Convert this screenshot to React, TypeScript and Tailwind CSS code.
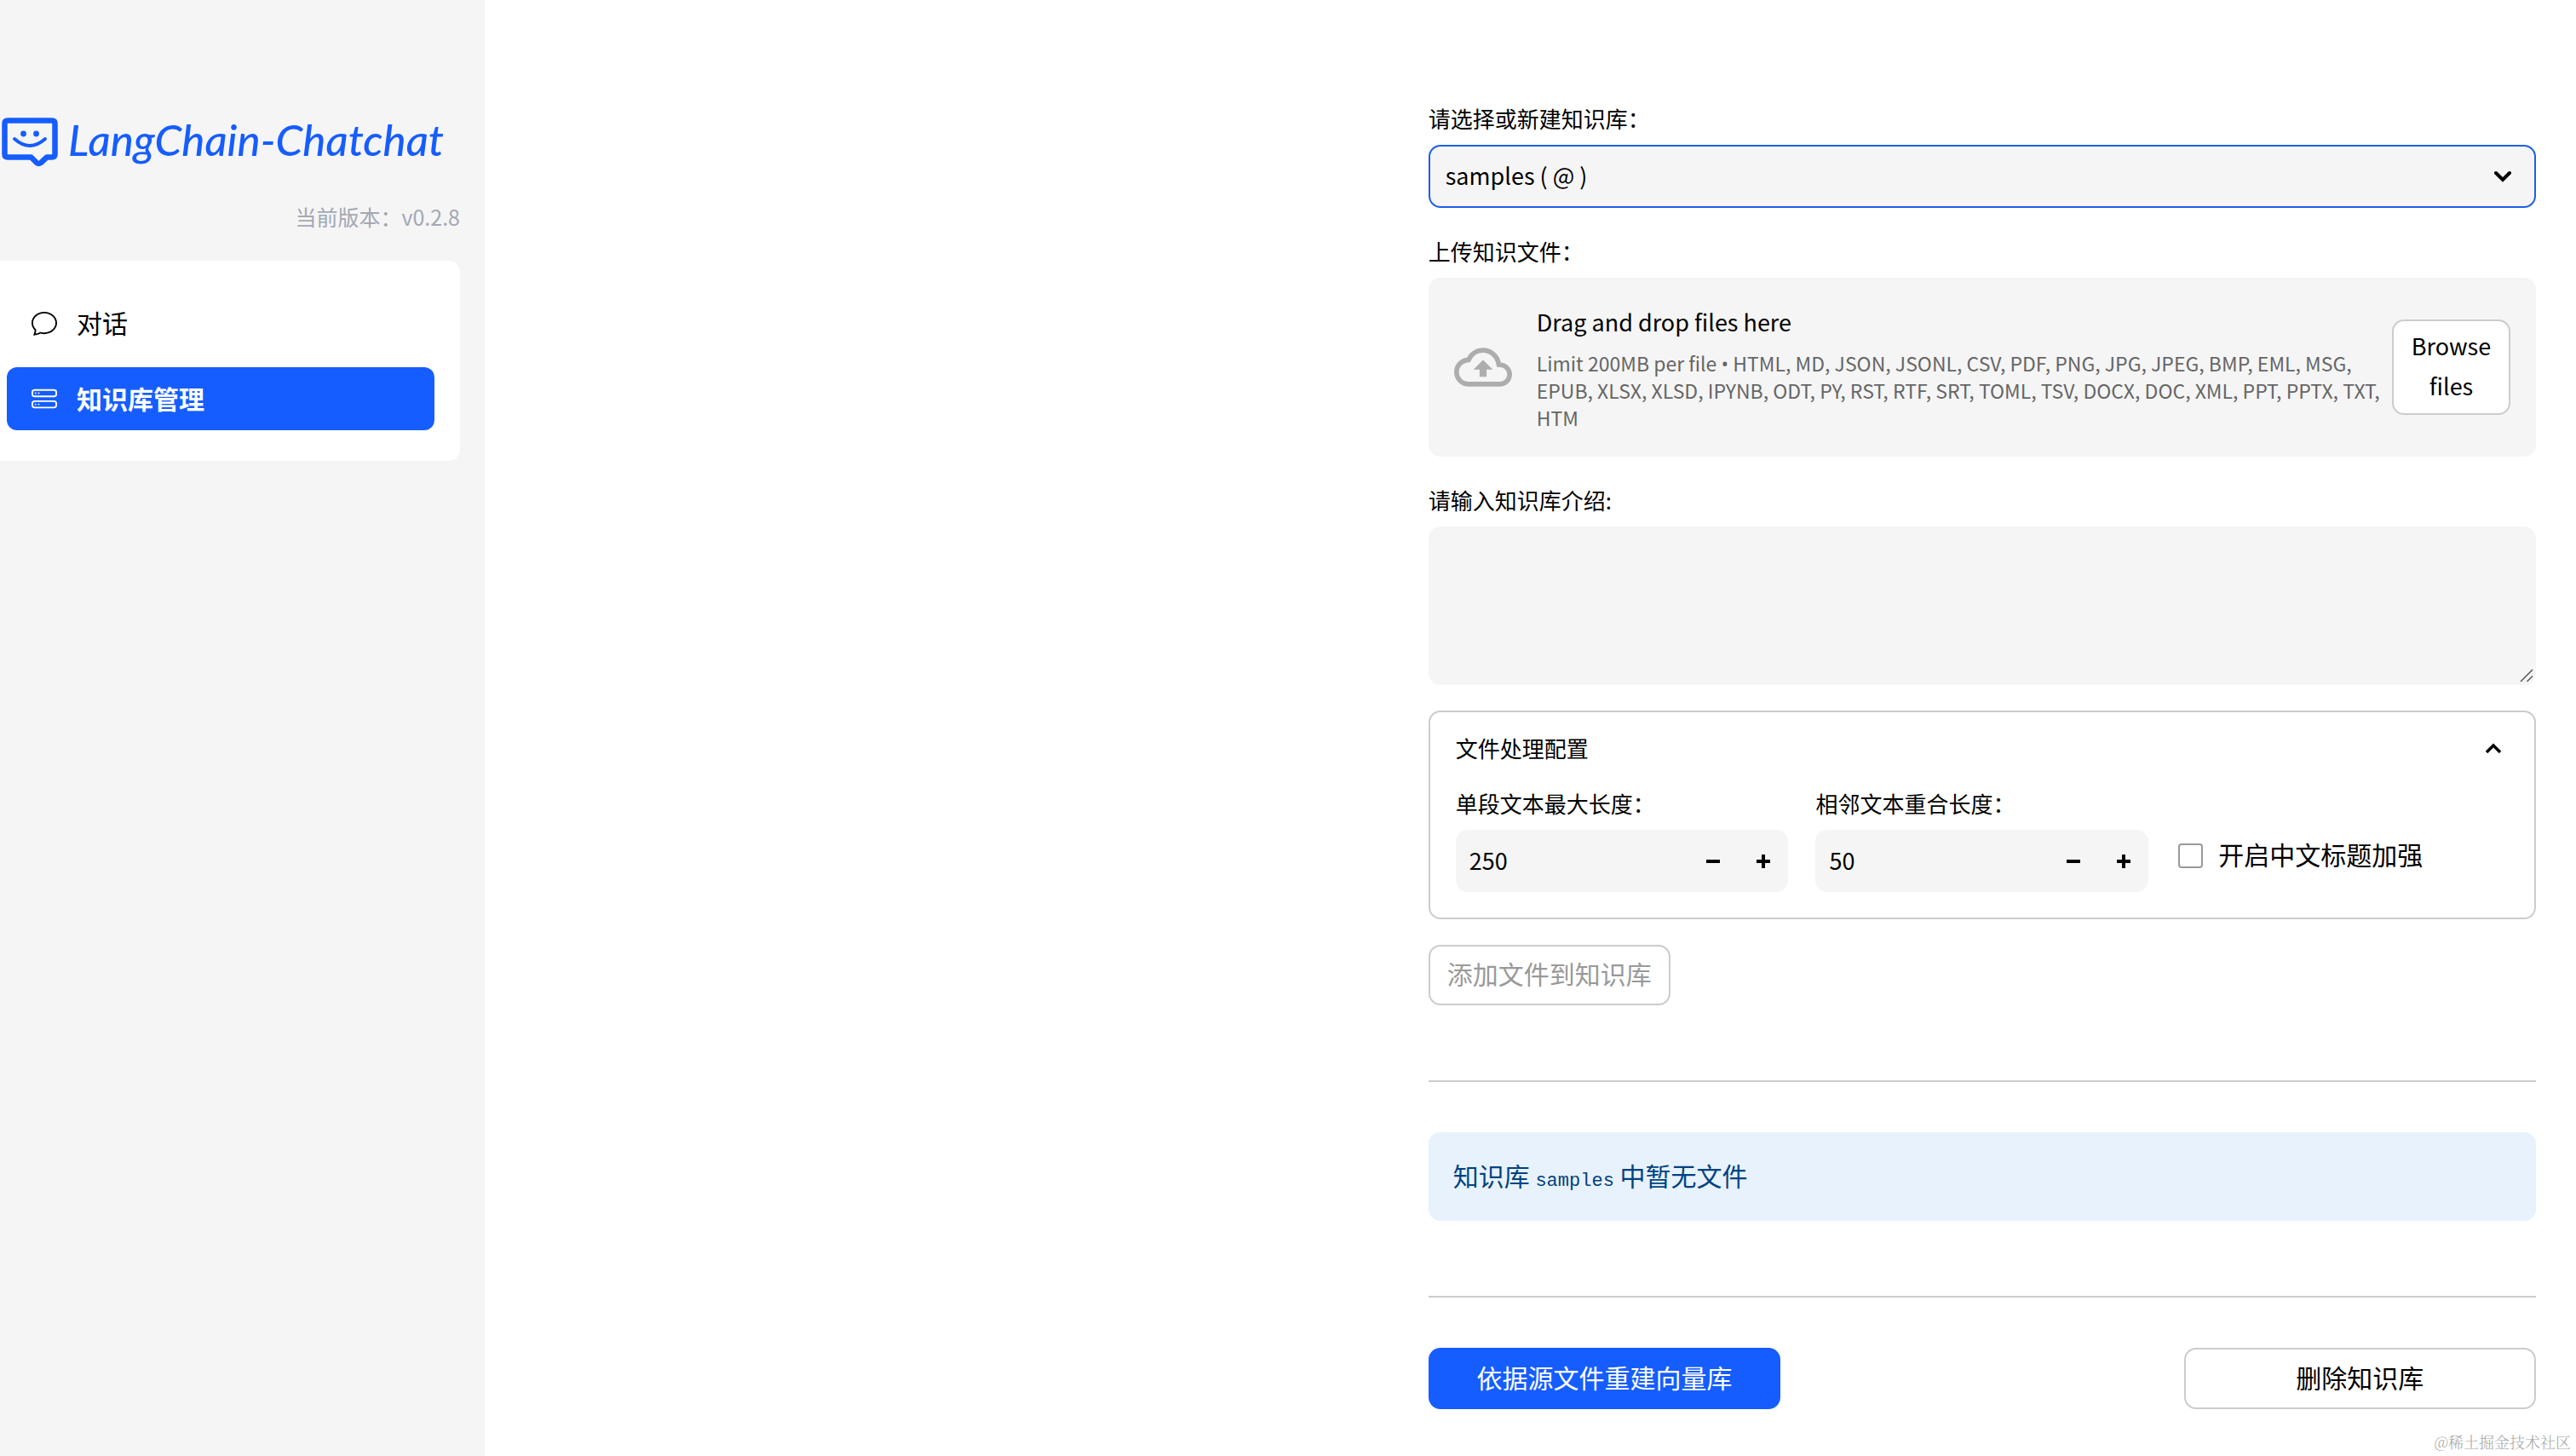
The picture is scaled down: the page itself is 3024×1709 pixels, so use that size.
import { useRef, useState } from "react";
import type { ReactNode } from "react";
import { BsChat, BsHddStack } from "react-icons/bs";
import { MdOutlineCloudUpload } from "react-icons/md";

const menuItems = [
  { id: "dialogue", label: "对话", icon: BsChat },
  { id: "knowledge", label: "知识库管理", icon: BsHddStack },
];

const fileTypes =
  "HTML, MD, JSON, JSONL, CSV, PDF, PNG, JPG, JPEG, BMP, EML, MSG, EPUB, XLSX, XLSD, IPYNB, ODT, PY, RST, RTF, SRT, TOML, TSV, DOCX, DOC, XML, PPT, PPTX, TXT, HTM";

const Logo = () => (
  <div className="flex items-center gap-3 pl-[2px] text-[#165dff]">
    <svg className="h-[60px] w-[66px] shrink-0" viewBox="0 0 66 60" fill="none" aria-hidden="true">
      <path
        d="M7 5.500H59Q62.500 5.500 62.500 9V45Q62.500 48.500 59 48.500H53L46 55Q43.500 57 41 55L34.500 48.500H7Q3.500 48.500 3.500 45V9Q3.500 5.500 7 5.500Z"
        stroke="currentColor"
        strokeWidth="6.500"
        strokeLinejoin="round"
      />
      <circle cx="25.500" cy="21" r="3.400" fill="currentColor" />
      <circle cx="40.500" cy="21" r="3.400" fill="currentColor" />
      <path d="M15 27Q33 43 51 27" stroke="currentColor" strokeWidth="4" strokeLinecap="round" />
    </svg>
    <span className="pb-1 font-['Lato',sans-serif] text-[51px] leading-[56px] font-medium whitespace-nowrap italic">
      LangChain-Chatchat
    </span>
  </div>
);

const Sidebar = () => {
  const [active, setActive] = useState("knowledge");

  return (
    <aside className="w-[569px] shrink-0 bg-[#f5f5f5] pt-[136px] pr-[29px]">
      <Logo />
      <p className="mt-[38px] text-right text-[25px] leading-[40px] text-[#a3a8b4]">当前版本：v0.2.8</p>
      <nav className="mt-8 flex flex-col gap-[15px] rounded-r-[14px] bg-white py-9 pr-[30px] pl-2">
        {menuItems.map(({ id, label, icon: Icon }) => (
          <a
            key={id}
            href={`#${id}`}
            onClick={() => setActive(id)}
            className={`flex h-[74px] items-center gap-[23px] rounded-[12px] pl-[29px] text-[30px] ${
              active === id ? "bg-[#165dff] font-bold text-white" : "text-black"
            }`}
          >
            <Icon className="h-[30px] w-[30px]" />
            <span className="pb-[2px]">{label}</span>
          </a>
        ))}
      </nav>
    </aside>
  );
};

const FieldLabel = ({ htmlFor, children }: { htmlFor: string; children: ReactNode }) => (
  <label htmlFor={htmlFor} className="mb-[10px] block text-[26px] leading-[42px]">
    {children}
  </label>
);

const NumberField = ({ id, label, initial }: { id: string; label: string; initial: number }) => {
  const [value, setValue] = useState(initial);

  return (
    <div>
      <FieldLabel htmlFor={id}>{label}</FieldLabel>
      <div className="flex h-[73px] rounded-[14px] bg-[#f5f5f5]">
        <input
          id={id}
          type="text"
          inputMode="numeric"
          value={value}
          onChange={(e) => setValue(Number(e.target.value) || 0)}
          className="min-w-0 flex-1 bg-transparent pl-4 text-[27px] outline-none"
        />
        <button aria-label="-" onClick={() => setValue(value - 1)} className="flex w-[59px] items-center justify-center">
          <svg className="h-4 w-4" viewBox="0 0 16 16" aria-hidden="true">
            <path d="M0 6H16V10H0Z" fill="currentColor" />
          </svg>
        </button>
        <button aria-label="+" onClick={() => setValue(value + 1)} className="flex w-[59px] items-center justify-center">
          <svg className="h-4 w-4" viewBox="0 0 16 16" aria-hidden="true">
            <path d="M6 0H10V6H16V10H10V16H6V10H0V6H6Z" fill="currentColor" />
          </svg>
        </button>
      </div>
    </div>
  );
};

const Uploader = () => {
  const inputRef = useRef<HTMLInputElement>(null);

  return (
    <div>
      <FieldLabel htmlFor="files">上传知识文件：</FieldLabel>
      <div className="flex items-center rounded-[14px] bg-[#f5f5f5] p-[30px]">
        <MdOutlineCloudUpload className="mr-[29px] h-[68px] w-[68px] shrink-0 text-[#adadad]" />
        <div className="flex-1">
          <p className="mb-[10px] text-[27px] leading-[44px]">Drag and drop files here</p>
          <p className="text-[23px] leading-[32px] text-[#666]">
            Limit 200MB per file <span className="font-['Open_Sans',sans-serif] leading-none">•</span> {fileTypes}
          </p>
        </div>
        <input ref={inputRef} id="files" type="file" multiple className="hidden" />
        <button
          onClick={() => inputRef.current?.click()}
          className="h-[112px] w-[139px] shrink-0 rounded-[14px] border-2 border-[#ccc] bg-white pb-1 text-[27px] leading-[47px]"
        >
          Browse files
        </button>
      </div>
    </div>
  );
};

const FileConfig = () => {
  const [isOpen, setIsOpen] = useState(true);

  return (
    <section className="rounded-[14px] border-2 border-[#ccc] px-[30px]">
      <button
        onClick={() => setIsOpen(!isOpen)}
        aria-expanded={isOpen}
        className="flex h-[86px] w-full items-center justify-between pr-2 text-left text-[26px]"
      >
        <span className="pb-1">文件处理配置</span>
        <svg className="h-5 w-5" viewBox="0 0 20 20" fill="none" aria-hidden="true">
          <path d="M2 14L10 6L18 14" stroke="currentColor" strokeWidth="3.500" />
        </svg>
      </button>
      {isOpen && (
        <div className="grid grid-cols-3 gap-8 pb-[30px]">
          <NumberField id="chunk-size" label="单段文本最大长度：" initial={250} />
          <NumberField id="overlap" label="相邻文本重合长度：" initial={50} />
          <label className="mt-[60px] flex h-[44px] items-center gap-[18px] pl-[3px] text-[30px]">
            <input
              type="checkbox"
              className="h-[29px] w-[29px] appearance-none rounded-[4px] border-2 border-[#999] bg-white checked:bg-[#165dff]"
            />
            <span className="pb-1">开启中文标题加强</span>
          </label>
        </div>
      )}
    </section>
  );
};

const Divider = () => <hr className="mt-[58px] mb-[29px] border-t-2 border-[#ccc]" />;

export default function App() {
  return (
    <div
      lang="zh-CN"
      className="relative flex min-h-screen bg-white font-['Noto_Sans_CJK_SC',sans-serif] text-black"
    >
      <Sidebar />
      <main className="min-w-0 flex-1 pt-[118px] pr-[47px]">
        <div className="ml-auto flex w-[54%] flex-col gap-[30px]">
          <div>
            <FieldLabel htmlFor="kb">请选择或新建知识库：</FieldLabel>
            <div className="relative">
              <select
                id="kb"
                className="block h-[74px] w-full appearance-none rounded-[14px] border-2 border-[#1d5fe6] bg-[#f5f5f5] px-[18px] pb-[2px] text-[27px] outline-none"
              >
                <option>samples ( @ )</option>
              </select>
              <svg
                className="pointer-events-none absolute top-[27px] right-[29px] h-5 w-5"
                viewBox="0 0 20 20"
                fill="none"
                aria-hidden="true"
              >
                <path d="M2 6L10 14L18 6" stroke="currentColor" strokeWidth="4" strokeLinecap="round" />
              </svg>
            </div>
          </div>

          <Uploader />

          <div>
            <FieldLabel htmlFor="kb-info">请输入知识库介绍:</FieldLabel>
            <div className="relative">
              <textarea
                id="kb-info"
                className="block h-[186px] w-full resize-none rounded-[14px] bg-[#f5f5f5] p-5 text-[27px] outline-none"
              />
              <svg className="absolute right-[3px] bottom-[3px] h-4 w-4" viewBox="0 0 16 16" aria-hidden="true">
                <path d="M1 15L15 1M8.500 15L15 8.500" stroke="#555" strokeWidth="1.500" />
              </svg>
            </div>
          </div>

          <FileConfig />

          <button
            disabled
            className="h-[71px] self-start rounded-[14px] border-2 border-[#ccc] px-5 pb-1 text-[30px] text-[#999]"
          >
            添加文件到知识库
          </button>

          <Divider />

          <div className="rounded-[14px] bg-[#e8f2fc] px-[29px] pt-[27px] pb-[31px] text-[30px] leading-[46px] text-[#004280]">
            知识库 <code className="font-['Liberation_Mono',monospace] text-[22px] leading-none">samples</code> 中暂无文件
          </div>

          <Divider />

          <div className="grid grid-cols-3 gap-[30px]">
            <button className="h-[72px] rounded-[14px] bg-[#165dff] pb-1 text-[30px] text-white">
              依据源文件重建向量库
            </button>
            <button className="col-start-3 h-[72px] rounded-[14px] border-2 border-[#ccc] pb-1 text-[30px]">
              删除知识库
            </button>
          </div>
        </div>
      </main>
      <span className="absolute right-[6px] bottom-[4px] font-['Noto_Serif_CJK_SC','Noto_Sans_CJK_SC',serif] text-[18px] leading-[26px] font-light text-[#a6a6a6]">
        @稀土掘金技术社区
      </span>
    </div>
  );
}
